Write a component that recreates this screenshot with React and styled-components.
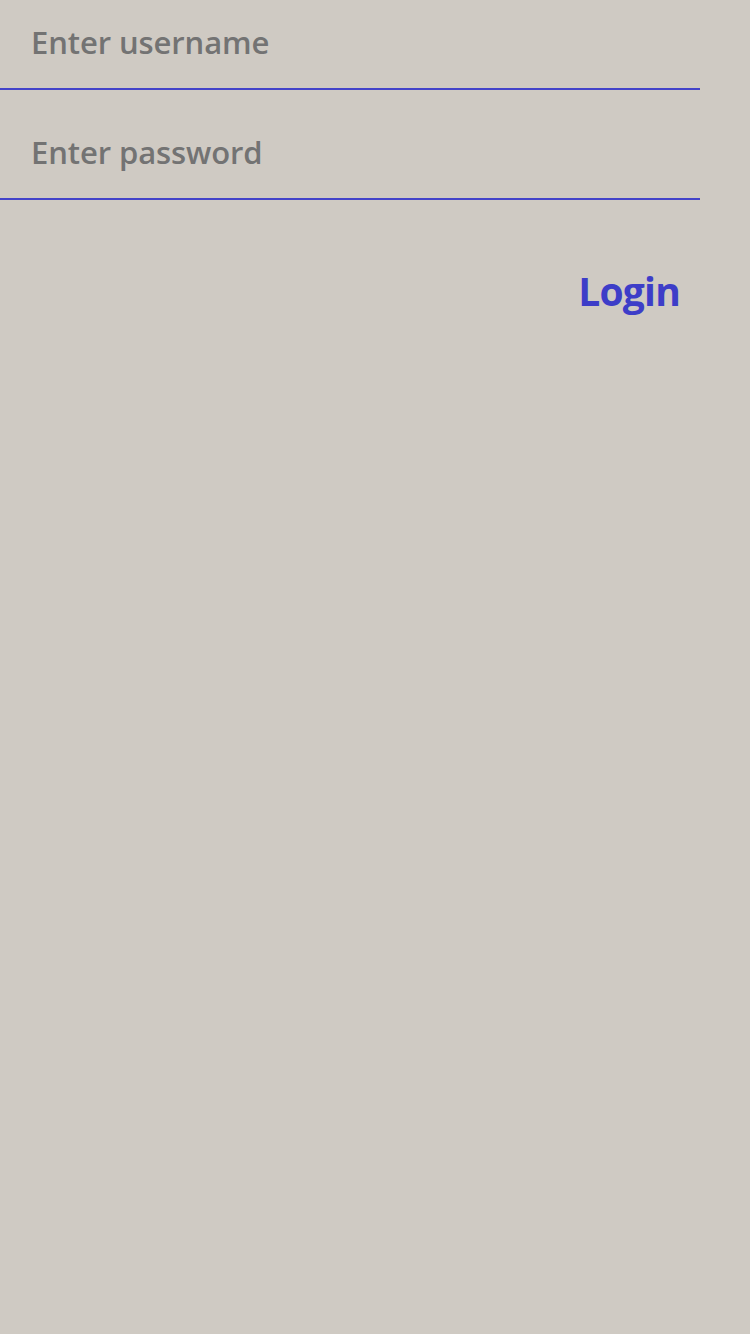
import styled, { createGlobalStyle } from 'styled-components';

const GlobalStyle = createGlobalStyle`
html, body {
    margin: 0;
    padding: 0;
    background: #CFCAC3;
}
`

export default function App() {
    return (
        <Page>
            <GlobalStyle />
            <Form>
                <Field>
                    <Input type="text" placeholder="Enter username" />
                </Field>
                <Field>
                    <Input type="password" placeholder="Enter password" />
                </Field>
                <Actions>
                    <LoginButton>Login</LoginButton>
                </Actions>
            </Form>
        </Page>
    )
}

const Page = styled.div`
width: 750px;
min-height: 1334px;
background: #CFCAC3;
`

const Form = styled.form`
width: 700px;
display: flex;
flex-direction: column;
gap: 20px;
`

const Field = styled.div`
height: 88px;
border-bottom: 2px solid #4343C9;
display: flex;
align-items: center;
`

const Input = styled.input`
width: 100%;
height: 100%;
box-sizing: border-box;
padding: 0 0 5px 31px;
border: none;
outline: none;
background: transparent;
font-family: 'Open Sans', sans-serif;
font-weight: 600;
font-size: 31px;
letter-spacing: -0.1px;
color: #737373;

&::placeholder {
    color: #737373;
}
`

const Actions = styled.div`
display: flex;
justify-content: flex-end;
padding: 44px 20px 0 0;
`

const LoginButton = styled.button`
border: none;
background: transparent;
padding: 0;
font-family: 'Open Sans', sans-serif;
font-weight: 700;
font-size: 39px;
letter-spacing: -0.8px;
color: #3D3DC8;
cursor: pointer;
`
